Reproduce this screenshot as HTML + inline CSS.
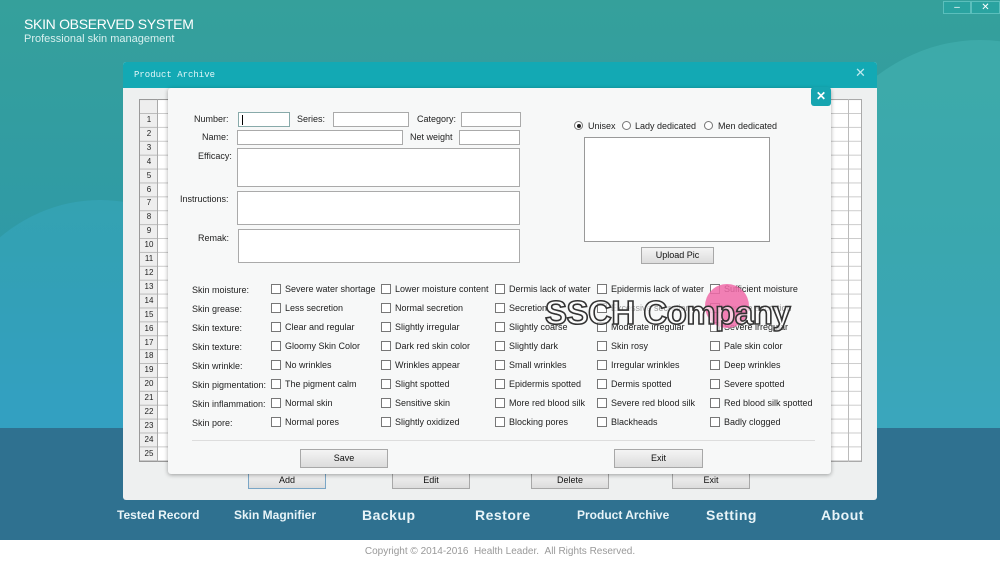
<!DOCTYPE html>
<html><head><meta charset="utf-8"><style>
*{margin:0;padding:0;box-sizing:border-box}
html,body{width:1000px;height:562px;overflow:hidden}
body{position:relative;font-family:"Liberation Sans",Arial,sans-serif;background:#fff}
.a{position:absolute}
svg{display:block}
.bgwrap{left:0;top:0;width:1000px;height:540px;overflow:hidden;background:linear-gradient(180deg,#35a09b 0%,#2f9aa6 45%,#2e98bb 78%)}
.band{left:0;top:428px;width:1000px;height:112px;background:#2f7190}
.t9{font-size:9px;color:#222;white-space:nowrap}
.inp{background:#fff;border:1px solid #aaa}
.btn{background:linear-gradient(#f4f4f4,#dcdcdc);border:1px solid #a8a8a8;font-size:9px;color:#111;text-align:center}
.nav{top:508px;color:#e8f4f8;font-size:13px;font-weight:bold;white-space:nowrap}
</style></head><body>
<div class="a bgwrap">
<div class="a" style="left:-60px;top:200px;width:320px;height:340px;border-radius:50% 50% 0 0;background:#3db0cf;opacity:.35"></div>
<div class="a" style="left:780px;top:40px;width:400px;height:500px;border-radius:50% 50% 0 0;background:#4fc0c0;opacity:.35"></div>
<div class="a band"></div>
</div>
<div class="a" style="left:0;top:546px;width:1000px;text-align:center;font-size:10px;color:#999">Copyright © 2014-2016 &nbsp;Health Leader. &nbsp;All Rights Reserved.</div>
<div class="a" style="left:24px;top:16px;color:#fff;font-size:14px;letter-spacing:-.3px">SKIN OBSERVED SYSTEM</div>
<div class="a" style="left:24px;top:33px;color:#d8f0ef;font-size:11px">Professional skin management</div>
<div class="a" style="left:943px;top:1px;width:28px;height:13px;background:#2aa3a0;border:1px solid #5bbfbc;color:#fff;font-size:10px;text-align:center;line-height:11px">–</div>
<div class="a" style="left:971px;top:1px;width:29px;height:13px;background:#2aa3a0;border:1px solid #5bbfbc;color:#fff;font-size:10px;text-align:center;line-height:11px">✕</div>

<div class="a" style="left:123px;top:62px;width:754px;height:438px;background:#eef0f0;border-radius:3px"></div>
<div class="a" style="left:123px;top:62px;width:754px;height:26px;background:#13a9b4;border-radius:3px 3px 0 0"></div>
<div class="a" style="left:134px;top:70px;color:#e0f6f8;font-family:'Liberation Mono',monospace;font-size:9px">Product Archive</div>
<div class="a" style="left:855px;top:65px;color:#bfe9ee;font-size:13px">✕</div>
<div class="a" style="left:139px;top:99px;width:30px;height:363px;background:#fff;border:1px solid #999;
background-image:linear-gradient(#ccc 1px,transparent 1px);background-size:100% 13.9px;background-position:0 13px"></div>
<div class="a" style="left:139px;top:99px;width:19px;height:363px;background:#eee;border:1px solid #999;border-right:1px solid #aaa;
background-image:linear-gradient(#bbb 1px,transparent 1px);background-size:100% 13.9px;background-position:0 13px"></div>
<div class="a" style="left:140px;top:113px;width:18px;font-size:8px;color:#222;text-align:center;line-height:13.9px">1<br>2<br>3<br>4<br>5<br>6<br>7<br>8<br>9<br>10<br>11<br>12<br>13<br>14<br>15<br>16<br>17<br>18<br>19<br>20<br>21<br>22<br>23<br>24<br>25</div>
<div class="a" style="left:828px;top:99px;width:34px;height:363px;background:#fff;border:1px solid #aaa;
background-image:linear-gradient(#ccc 1px,transparent 1px);background-size:100% 13.9px;background-position:0 13px"></div>
<div class="a" style="left:848px;top:99px;width:1px;height:363px;background:#bbb"></div>
<div class="a btn" style="left:248px;top:472px;width:78px;height:17px;line-height:15px;border-color:#7aa6c6">Add</div>
<div class="a btn" style="left:392px;top:472px;width:78px;height:17px;line-height:15px">Edit</div>
<div class="a btn" style="left:531px;top:472px;width:78px;height:17px;line-height:15px">Delete</div>
<div class="a btn" style="left:672px;top:472px;width:78px;height:17px;line-height:15px">Exit</div>

<div class="a" style="left:168px;top:88px;width:663px;height:386px;background:#f7f8f8;border-radius:3px;box-shadow:0 1px 4px rgba(0,0,0,.35)"></div>
<div class="a" style="left:811px;top:87px;width:20px;height:19px;background:#16a5b0;border-radius:3px;color:#fff;font-size:12px;font-weight:bold;text-align:center;line-height:19px">✕</div>

<div class="a t9" style="left:194px;top:114px">Number:</div>
<div class="a inp" style="left:238px;top:112px;width:52px;height:15px;border-color:#8aa"><div style="margin:2px 0 0 3px;width:1px;height:10px;background:#000"></div></div>
<div class="a t9" style="left:297px;top:114px">Series:</div>
<div class="a inp" style="left:333px;top:112px;width:76px;height:15px"></div>
<div class="a t9" style="left:417px;top:114px">Category:</div>
<div class="a inp" style="left:461px;top:112px;width:60px;height:15px"></div>
<div class="a t9" style="left:202px;top:132px">Name:</div>
<div class="a inp" style="left:237px;top:130px;width:166px;height:15px"></div>
<div class="a t9" style="left:410px;top:132px">Net weight</div>
<div class="a inp" style="left:459px;top:130px;width:61px;height:15px"></div>
<div class="a t9" style="left:198px;top:151px">Efficacy:</div>
<div class="a inp" style="left:237px;top:148px;width:283px;height:39px"></div>
<div class="a t9" style="left:180px;top:194px">Instructions:</div>
<div class="a inp" style="left:237px;top:191px;width:283px;height:34px"></div>
<div class="a t9" style="left:198px;top:233px">Remak:</div>
<div class="a inp" style="left:238px;top:229px;width:282px;height:34px"></div>

<div class="a" style="left:574px;top:121px;width:9px;height:9px;border:1px solid #777;border-radius:50%;background:#fff"><div style="margin:1.5px;width:4px;height:4px;border-radius:50%;background:#222"></div></div>
<div class="a t9" style="left:588px;top:121px">Unisex</div>
<div class="a" style="left:622px;top:121px;width:9px;height:9px;border:1px solid #777;border-radius:50%;background:#fff"></div>
<div class="a t9" style="left:635px;top:121px">Lady dedicated</div>
<div class="a" style="left:704px;top:121px;width:9px;height:9px;border:1px solid #777;border-radius:50%;background:#fff"></div>
<div class="a t9" style="left:718px;top:121px">Men dedicated</div>
<div class="a inp" style="left:584px;top:137px;width:186px;height:105px;border-color:#999"></div>
<div class="a btn" style="left:641px;top:247px;width:73px;height:17px;line-height:15px">Upload Pic</div>

<div class="a t9" style="left:192px;top:281px;line-height:19px">Skin moisture:<br>Skin grease:<br>Skin texture:<br>Skin texture:<br>Skin wrinkle:<br>Skin pigmentation:<br>Skin inflammation:<br>Skin pore:</div>
<div class="a t9" style="left:285px;top:280px;line-height:19px">Severe water shortage<br>Less secretion<br>Clear and regular<br>Gloomy Skin Color<br>No wrinkles<br>The pigment calm<br>Normal skin<br>Normal pores</div>
<div class="a t9" style="left:395px;top:280px;line-height:19px">Lower moisture content<br>Normal secretion<br>Slightly irregular<br>Dark red skin color<br>Wrinkles appear<br>Slight spotted<br>Sensitive skin<br>Slightly oxidized</div>
<div class="a t9" style="left:509px;top:280px;line-height:19px">Dermis lack of water<br>Secretion<br>Slightly coarse<br>Slightly dark<br>Small wrinkles<br>Epidermis spotted<br>More red blood silk<br>Blocking pores</div>
<div class="a t9" style="left:611px;top:280px;line-height:19px">Epidermis lack of water<br><span style="color:#999">Excessive secretion</span><br>Moderate irregular<br>Skin rosy<br>Irregular wrinkles<br>Dermis spotted<br>Severe red blood silk<br>Blackheads</div>
<div class="a t9" style="left:724px;top:280px;line-height:19px">Sufficient moisture<br><span style="color:#999">Severe secretion</span><br>Severe irregular<br>Pale skin color<br>Deep wrinkles<br>Severe spotted<br>Red blood silk spotted<br>Badly clogged</div>
<svg class="a" style="left:0;top:0" width="1000" height="540">
<g fill="#fff" stroke="#777" stroke-width="1">
<rect x="271.5" y="284.5" width="9" height="9"/><rect x="381.5" y="284.5" width="9" height="9"/><rect x="495.5" y="284.5" width="9" height="9"/><rect x="597.5" y="284.5" width="9" height="9"/><rect x="710.5" y="284.5" width="9" height="9"/>
<rect x="271.5" y="303.5" width="9" height="9"/><rect x="381.5" y="303.5" width="9" height="9"/><rect x="495.5" y="303.5" width="9" height="9"/><rect x="597.5" y="303.5" width="9" height="9"/><rect x="710.5" y="303.5" width="9" height="9"/>
<rect x="271.5" y="322.5" width="9" height="9"/><rect x="381.5" y="322.5" width="9" height="9"/><rect x="495.5" y="322.5" width="9" height="9"/><rect x="597.5" y="322.5" width="9" height="9"/><rect x="710.5" y="322.5" width="9" height="9"/>
<rect x="271.5" y="341.5" width="9" height="9"/><rect x="381.5" y="341.5" width="9" height="9"/><rect x="495.5" y="341.5" width="9" height="9"/><rect x="597.5" y="341.5" width="9" height="9"/><rect x="710.5" y="341.5" width="9" height="9"/>
<rect x="271.5" y="360.5" width="9" height="9"/><rect x="381.5" y="360.5" width="9" height="9"/><rect x="495.5" y="360.5" width="9" height="9"/><rect x="597.5" y="360.5" width="9" height="9"/><rect x="710.5" y="360.5" width="9" height="9"/>
<rect x="271.5" y="379.5" width="9" height="9"/><rect x="381.5" y="379.5" width="9" height="9"/><rect x="495.5" y="379.5" width="9" height="9"/><rect x="597.5" y="379.5" width="9" height="9"/><rect x="710.5" y="379.5" width="9" height="9"/>
<rect x="271.5" y="398.5" width="9" height="9"/><rect x="381.5" y="398.5" width="9" height="9"/><rect x="495.5" y="398.5" width="9" height="9"/><rect x="597.5" y="398.5" width="9" height="9"/><rect x="710.5" y="398.5" width="9" height="9"/>
<rect x="271.5" y="417.5" width="9" height="9"/><rect x="381.5" y="417.5" width="9" height="9"/><rect x="495.5" y="417.5" width="9" height="9"/><rect x="597.5" y="417.5" width="9" height="9"/><rect x="710.5" y="417.5" width="9" height="9"/>
</g>
<line x1="192" y1="440.5" x2="815" y2="440.5" stroke="#ddd"/>
<circle cx="727" cy="306" r="22" fill="#f06aa8" opacity=".85"/>
<text x="545" y="324" font-family="Liberation Sans,sans-serif" font-size="33" font-weight="bold" fill="#fff" stroke="#333" stroke-width="1.6" fill-opacity=".6" letter-spacing="-0.5">SSCH Company</text>
</svg>
<div class="a btn" style="left:300px;top:449px;width:88px;height:19px;line-height:17px">Save</div>
<div class="a btn" style="left:614px;top:449px;width:89px;height:19px;line-height:17px">Exit</div>

<div class="a nav" style="left:117px;font-size:12px">Tested Record</div>
<div class="a nav" style="left:234px;font-size:12px">Skin Magnifier</div>
<div class="a nav" style="left:362px;font-size:14px;letter-spacing:.5px;top:507px">Backup</div>
<div class="a nav" style="left:475px;font-size:14px;letter-spacing:.5px;top:507px">Restore</div>
<div class="a nav" style="left:577px;font-size:12px">Product Archive</div>
<div class="a nav" style="left:706px;font-size:14px;letter-spacing:.5px;top:507px">Setting</div>
<div class="a nav" style="left:821px;font-size:14px;letter-spacing:.5px;top:507px">About</div>
</body></html>
